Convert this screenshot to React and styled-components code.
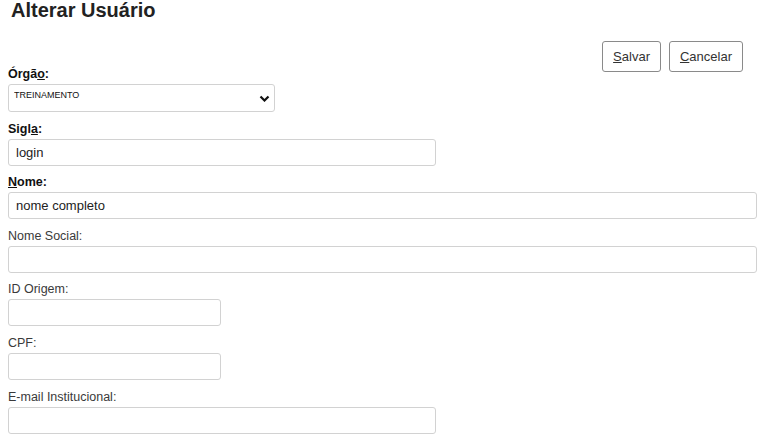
import styled, { createGlobalStyle } from "styled-components";

const GlobalStyle = createGlobalStyle`
    html, body {
        margin: 0;
        padding: 0;
        background: #fff;
    }
    body {
        font-family: "Liberation Sans", Arial, sans-serif;
        color: #222;
        overflow: hidden;
    }
`

const Page = styled.div`
    padding: 0 2px 0 8px;
`

const Title = styled.h1`
    margin: 0 0 0 3px;
    font-size: 20px;
    line-height: 20px;
    font-weight: 700;
    color: #222;
`

const HeaderRow = styled.div`
    display: flex;
    justify-content: space-between;
    align-items: flex-end;
    margin-top: 21px;
`

const ButtonBar = styled.div`
    display: flex;
    gap: 8px;
    margin-right: 14px;
    margin-bottom: 12px;
`

const Button = styled.button`
    height: 31px;
    padding: 0 10px;
    background: #fff;
    border: 1px solid #8a8a8a;
    border-radius: 3px;
    font-family: "Liberation Sans", Arial, sans-serif;
    font-size: 13px;
    color: #333;
    cursor: pointer;

    u {
        text-decoration: underline;
    }
`

const Fields = styled.div`
    display: flex;
    flex-direction: column;
    gap: 8.6px;
`

const Field = styled.div`
    display: flex;
    flex-direction: column;
    align-items: flex-start;
`

const Label = styled.label`
    display: block;
    font-size: 12.5px;
    line-height: 16px;
    margin-bottom: 2px;
    font-weight: ${props => props.$bold ? 700 : 400};
    color: ${props => props.$bold ? "#111" : "#3a3a3a"};
`

const Input = styled.input`
    box-sizing: border-box;
    width: ${props => props.$width}px;
    height: 27px;
    padding: 0 7px;
    border: 1px solid #d2d2d2;
    border-radius: 3px;
    font-family: "Liberation Sans", Arial, sans-serif;
    font-size: 13px;
    color: #222;
    background: #fff;
    outline: none;
`

const SelectWrap = styled.div`
    position: relative;
    width: 267px;
`

const Select = styled.select`
    box-sizing: border-box;
    width: 100%;
    height: 28px;
    padding: 0 24px 6px 5px;
    border: 1px solid #d2d2d2;
    border-radius: 3px;
    appearance: none;
    background: #fff;
    font-family: "Liberation Sans", Arial, sans-serif;
    font-size: 9px;
    color: #111;
    outline: none;
`

const Chevron = styled.svg`
    position: absolute;
    right: 5px;
    top: 11px;
    pointer-events: none;
`

const fields = [
    { label: "Sigl", key: "a", rest: ":", bold: true, width: 428, value: "login" },
    { label: "", key: "N", rest: "ome:", bold: true, width: 749, value: "nome completo" },
    { label: "Nome Social:", width: 749 },
    { label: "ID Origem:", width: 213 },
    { label: "CPF:", width: 213 },
    { label: "E-mail Institucional:", width: 428 },
]

export default function App() {
    return (
        <Page>
            <GlobalStyle />
            <Title>Alterar Usuário</Title>
            <HeaderRow>
                <Label $bold htmlFor="orgao">Órgã<u>o</u>:</Label>
                <ButtonBar>
                    <Button><u>S</u>alvar</Button>
                    <Button><u>C</u>ancelar</Button>
                </ButtonBar>
            </HeaderRow>
            <Fields>
                <Field>
                    <SelectWrap>
                        <Select id="orgao" defaultValue="TREINAMENTO">
                            <option>TREINAMENTO</option>
                        </Select>
                        <Chevron width="11" height="7" viewBox="0 0 11 7">
                            <path d="M1.5 1.5l4 4 4-4" fill="none" stroke="#111" strokeWidth="2.2" />
                        </Chevron>
                    </SelectWrap>
                </Field>
                {fields.map((f, i) => (
                    <Field key={i}>
                        <Label $bold={f.bold}>
                            {f.label}
                            {f.key && <u>{f.key}</u>}
                            {f.rest}
                        </Label>
                        <Input $width={f.width} defaultValue={f.value || ""} />
                    </Field>
                ))}
            </Fields>
        </Page>
    )
}
